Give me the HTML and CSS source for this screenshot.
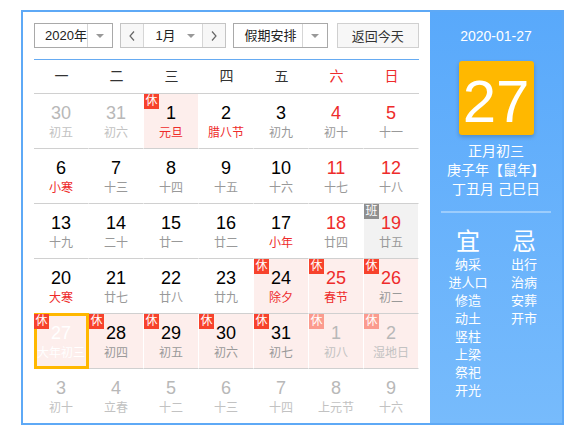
FILE: index.html
```html
<!DOCTYPE html>
<html lang="zh-CN">
<head>
<meta charset="utf-8">
<title>万年历</title>
<link rel="stylesheet" href="styles.css">
</head>
<body>
<div class="cal">
  <div class="main">
    <div class="toolbar">
      <div class="select year">
        <span class="val">2020年</span>
        <span class="drop"><i class="tri"></i></span>
      </div>
      <div class="mgroup">
        <span class="nav"><svg width="6" height="10" viewBox="0 0 6 10"><polyline points="5,0.5 1,5 5,9.5" fill="none" stroke="#666" stroke-width="1.2"/></svg></span>
        <span class="mval"><span>1月</span><i class="tri"></i></span>
        <span class="nav"><svg width="6" height="10" viewBox="0 0 6 10"><polyline points="1,0.5 5,5 1,9.5" fill="none" stroke="#666" stroke-width="1.2"/></svg></span>
      </div>
      <div class="select holiday">
        <span class="val">假期安排</span>
        <span class="drop"><i class="tri"></i></span>
      </div>
      <button class="today">返回今天</button>
    </div>
    <div class="weekdays">
      <span>一</span><span>二</span><span>三</span><span>四</span><span>五</span><span class="red">六</span><span class="red">日</span>
    </div>
    <div class="grid">
      <div class="cell other"><div class="num">30</div><div class="lunar">初五</div></div>
      <div class="cell other"><div class="num">31</div><div class="lunar">初六</div></div>
      <div class="cell rest"><span class="badge">休</span><div class="num">1</div><div class="lunar fest">元旦</div></div>
      <div class="cell"><div class="num">2</div><div class="lunar fest">腊八节</div></div>
      <div class="cell"><div class="num">3</div><div class="lunar">初九</div></div>
      <div class="cell wk"><div class="num">4</div><div class="lunar">初十</div></div>
      <div class="cell wk"><div class="num">5</div><div class="lunar">十一</div></div>

      <div class="cell"><div class="num">6</div><div class="lunar fest">小寒</div></div>
      <div class="cell"><div class="num">7</div><div class="lunar">十三</div></div>
      <div class="cell"><div class="num">8</div><div class="lunar">十四</div></div>
      <div class="cell"><div class="num">9</div><div class="lunar">十五</div></div>
      <div class="cell"><div class="num">10</div><div class="lunar">十六</div></div>
      <div class="cell wk"><div class="num">11</div><div class="lunar">十七</div></div>
      <div class="cell wk"><div class="num">12</div><div class="lunar">十八</div></div>

      <div class="cell"><div class="num">13</div><div class="lunar">十九</div></div>
      <div class="cell"><div class="num">14</div><div class="lunar">二十</div></div>
      <div class="cell"><div class="num">15</div><div class="lunar">廿一</div></div>
      <div class="cell"><div class="num">16</div><div class="lunar">廿二</div></div>
      <div class="cell"><div class="num">17</div><div class="lunar fest">小年</div></div>
      <div class="cell wk"><div class="num">18</div><div class="lunar">廿四</div></div>
      <div class="cell wk work"><span class="badge ban">班</span><div class="num">19</div><div class="lunar">廿五</div></div>

      <div class="cell"><div class="num">20</div><div class="lunar fest">大寒</div></div>
      <div class="cell"><div class="num">21</div><div class="lunar">廿七</div></div>
      <div class="cell"><div class="num">22</div><div class="lunar">廿八</div></div>
      <div class="cell"><div class="num">23</div><div class="lunar">廿九</div></div>
      <div class="cell rest"><span class="badge">休</span><div class="num">24</div><div class="lunar fest">除夕</div></div>
      <div class="cell rest wk"><span class="badge">休</span><div class="num">25</div><div class="lunar fest">春节</div></div>
      <div class="cell rest wk"><span class="badge">休</span><div class="num">26</div><div class="lunar">初二</div></div>

      <div class="cell rest selected"><span class="badge">休</span><div class="num">27</div><div class="lunar">大年初三</div></div>
      <div class="cell rest"><span class="badge">休</span><div class="num">28</div><div class="lunar">初四</div></div>
      <div class="cell rest"><span class="badge">休</span><div class="num">29</div><div class="lunar">初五</div></div>
      <div class="cell rest"><span class="badge">休</span><div class="num">30</div><div class="lunar">初六</div></div>
      <div class="cell rest"><span class="badge">休</span><div class="num">31</div><div class="lunar">初七</div></div>
      <div class="cell rest other"><span class="badge faded">休</span><div class="num">1</div><div class="lunar">初八</div></div>
      <div class="cell rest other"><span class="badge faded">休</span><div class="num">2</div><div class="lunar">湿地日</div></div>

      <div class="cell other last"><div class="num">3</div><div class="lunar">初十</div></div>
      <div class="cell other last"><div class="num">4</div><div class="lunar">立春</div></div>
      <div class="cell other last"><div class="num">5</div><div class="lunar">十二</div></div>
      <div class="cell other last"><div class="num">6</div><div class="lunar">十三</div></div>
      <div class="cell other last"><div class="num">7</div><div class="lunar">十四</div></div>
      <div class="cell other last"><div class="num">8</div><div class="lunar">上元节</div></div>
      <div class="cell other last"><div class="num">9</div><div class="lunar">十六</div></div>
    </div>
  </div>
  <aside class="side">
    <div class="sdate">2020-01-27</div>
    <div class="bigday">27</div>
    <div class="slunar">
      <div>正月初三</div>
      <div>庚子年【鼠年】</div>
      <div>丁丑月 己巳日</div>
    </div>
    <div class="sep"></div>
    <div class="yiji">
      <div class="col">
        <div class="head">宜</div>
        <div class="item">纳采</div>
        <div class="item">进人口</div>
        <div class="item">修造</div>
        <div class="item">动土</div>
        <div class="item">竖柱</div>
        <div class="item">上梁</div>
        <div class="item">祭祀</div>
        <div class="item">开光</div>
      </div>
      <div class="col">
        <div class="head">忌</div>
        <div class="item">出行</div>
        <div class="item">治病</div>
        <div class="item">安葬</div>
        <div class="item">开市</div>
      </div>
    </div>
  </aside>
</div>
</body>
</html>
```

FILE: styles.css
```css
html, body {
  margin: 0;
  padding: 0;
  background: #fff;
}
body {
  font-family: "Liberation Sans", "Noto Sans CJK SC", sans-serif;
  color: #333;
}
.cal {
  display: flex;
  margin: 10px 0 0 21px;
  width: 539px;
  height: 411px;
  border: 2px solid #5ea9f6;
}
.main {
  width: 407px;
  box-sizing: border-box;
  padding: 11px 11px 0 11px;
}
.toolbar {
  display: flex;
  height: 25px;
  padding-bottom: 11px;
  border-bottom: 1px solid #66abf2;
}
.select {
  display: flex;
  height: 25px;
  box-sizing: border-box;
  border: 1px solid #a9a9a9;
  background: #fff;
  font-size: 13px;
  line-height: 23px;
}
.select .val {
  flex: 1;
  padding-left: 10px;
  color: #222;
}
.select .drop {
  width: 24px;
  border-left: 1px solid #d6d6d6;
  display: flex;
  align-items: center;
  justify-content: center;
}
.tri {
  display: inline-block;
  width: 0;
  height: 0;
  border-left: 4px solid transparent;
  border-right: 4px solid transparent;
  border-top: 4px solid #999;
}
.year {
  width: 80px;
}
.mgroup {
  display: flex;
  width: 106px;
  height: 25px;
  box-sizing: border-box;
  margin-left: 7px;
  border: 1px solid #c4c4c4;
  font-size: 13px;
  line-height: 23px;
}
.mgroup .nav {
  width: 22px;
  display: flex;
  align-items: center;
  justify-content: center;
  background: #f7f7f7;
}
.mgroup .mval {
  width: 60px;
  box-sizing: border-box;
  border-left: 1px solid #d6d6d6;
  border-right: 1px solid #d6d6d6;
  display: flex;
  align-items: center;
  justify-content: space-between;
  padding: 0 7px 0 11px;
  color: #222;
}
.holiday {
  width: 95px;
  margin-left: 7px;
}
.today {
  width: 83px;
  height: 25px;
  margin-left: 9px;
  padding: 0;
  border: 1px solid #d0d0d0;
  background: #f7f7f7;
  font-family: "Liberation Sans", "Noto Sans CJK SC", sans-serif;
  font-size: 13px;
  color: #333;
}
.weekdays {
  display: grid;
  grid-template-columns: repeat(7, 55px);
  height: 33px;
  border-bottom: 1px solid #d0d0d0;
  font-size: 14px;
  line-height: 33px;
  text-align: center;
  color: #333;
}
.weekdays .red {
  color: #ee2b2b;
}
.grid {
  display: grid;
  grid-template-columns: repeat(7, 55px);
  grid-auto-rows: 55px;
}
.cell {
  position: relative;
  box-sizing: border-box;
  height: 55px;
  padding-top: 9px;
  border-bottom: 1px solid #d0d0d0;
  border-right: 1px solid transparent;
  background-clip: padding-box;
  text-align: center;
}
.cell.last {
  border-bottom: none;
}
.num {
  font-size: 18px;
  line-height: 20px;
  color: #000;
}
.lunar {
  margin-top: 3px;
  font-size: 12px;
  line-height: 14px;
  color: #999;
  white-space: nowrap;
}
.lunar.fest {
  color: #ee2b2b;
}
.wk .num {
  color: #ee2b2b;
}
.other .num {
  color: #b8b8b8;
}
.other .lunar {
  color: #c2c2c2;
}
.rest {
  background-color: #fdeeec;
}
.work {
  background-color: #f2f2f2;
}
.badge {
  position: absolute;
  top: 0;
  left: 0;
  z-index: 2;
  width: 15px;
  height: 15px;
  background: #f7422c;
  color: #fff;
  font-size: 12px;
  line-height: 15px;
  text-align: center;
}
.badge.faded {
  background: #fb9b8e;
}
.badge.ban {
  background: #8f8f8f;
}
.selected .num,
.selected .lunar {
  color: #fff;
}
.selected::after {
  content: "";
  position: absolute;
  top: -1px;
  left: 0;
  right: -1px;
  bottom: -1px;
  border: 3px solid #ffb800;
  z-index: 1;
}
.side {
  width: 132px;
  background: linear-gradient(#59a9fb, #77bbfc);
  color: #fff;
  display: flex;
  flex-direction: column;
  align-items: center;
  font-family: "Liberation Sans", "Noto Sans CJK SC", sans-serif;
}
.sdate {
  margin-top: 16px;
  font-size: 14px;
  line-height: 16px;
}
.bigday {
  margin-top: 17px;
  width: 75px;
  height: 74px;
  border-radius: 3px;
  background: #ffb800;
  box-shadow: 0 2px 4px rgba(0, 0, 0, 0.2);
  font-size: 60px;
  line-height: 82px;
  text-align: center;
  overflow: hidden;
}
.slunar {
  margin-top: 7px;
  font-size: 14px;
  line-height: 19px;
  text-align: center;
}
.sep {
  margin-top: 12px;
  width: 110px;
  height: 2px;
  background: rgba(255, 255, 255, 0.35);
}
.yiji {
  display: flex;
  margin-top: 15px;
}
.col {
  width: 56px;
  text-align: center;
}
.head {
  font-size: 24px;
  line-height: 28px;
}
.item {
  font-size: 13px;
  line-height: 18px;
}
```
